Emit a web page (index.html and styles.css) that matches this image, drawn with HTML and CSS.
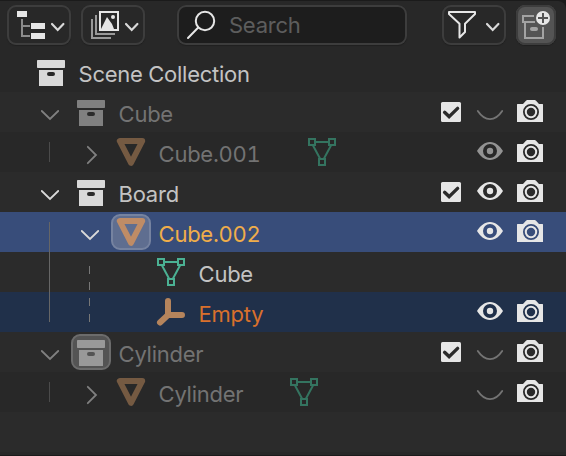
FILE: index.html
```html
<!DOCTYPE html>
<html lang="en">
<head>
<meta charset="utf-8">
<title>Outliner</title>
<link rel="stylesheet" href="styles.css">
</head>
<body>
<svg class="sprite" aria-hidden="true">
  <symbol id="down" viewBox="0 0 40 40"><path d="M11.8 19 20 27l8.2-8" fill="none" stroke="currentColor" stroke-width="1.8" stroke-linecap="round"/></symbol>
  <symbol id="right" viewBox="0 0 40 40"><path d="M17.8 14.8 26 23l-8.2 8.2" fill="none" stroke="currentColor" stroke-width="1.8" stroke-linecap="round"/></symbol>
  <symbol id="collection" viewBox="0 0 40 40"><rect x="7" y="8" width="28" height="8" rx=".7" fill="currentColor"/><path fill="currentColor" fill-rule="evenodd" d="M9 18h24v15.5q0 .5-.5.5h-23q-.5 0-.5-.5zM19 20a2 2 0 0 0 0 4h4a2 2 0 0 0 0-4z"/></symbol>
  <symbol id="object" viewBox="0 0 40 40"><path d="M9.7 9h22.6L21 31z" fill="none" stroke="currentColor" stroke-width="5.8" stroke-linejoin="round"/></symbol>
  <symbol id="mesh" viewBox="0 0 40 40"><path d="M8 7h6v6H8zM28 7h6v6h-6zM18 27h6v6h-6zM14 10h14M12 13.5l7 13M30 13.5l-7 13" fill="none" stroke="currentColor" stroke-width="2"/></symbol>
  <symbol id="empty" viewBox="0 0 40 40"><path d="M18 9v14h14M18 23l-8 7.5" fill="none" stroke="currentColor" stroke-width="6" stroke-linecap="round" stroke-linejoin="round"/></symbol>
  <symbol id="check" viewBox="0 0 40 40"><rect x="11" y="10" width="20" height="20" rx="1.5" fill="currentColor"/><path d="m14.6 20.3 4.5 4.3 8.5-8.2" fill="none" stroke="#2b2b2b" stroke-width="3.4" stroke-linecap="round"/></symbol>
  <symbol id="eye" viewBox="0 0 40 40"><path fill="currentColor" fill-rule="evenodd" d="M7 19C10 14 14.500 10 20 10s10 4 13 9c-3 5-7.500 9-13 9S10 24 7 19zM20 12a7 7 0 1 0 0 14a7 7 0 0 0 0-14z"/><circle cx="20" cy="19" r="3.200" fill="currentColor"/></symbol>
  <symbol id="closed" viewBox="0 0 40 40"><path d="M7.800 19C15 29.800 25 29.800 32.200 19" fill="none" stroke="currentColor" stroke-width="1.900" stroke-linecap="round"/></symbol>
  <symbol id="camera" viewBox="0 0 40 40"><path fill="currentColor" fill-rule="evenodd" d="M7.500 12H13l3.200-3.500q.5-.5 1.200-.5h7.200q.7 0 1.200.5L29 12h3.500q.5 0 .5.500v17q0 .5-.5.500h-25q-.5 0-.5-.5v-17q0-.5.5-.5zM21 12a8 8 0 1 0 0 16a8 8 0 0 0 0-16z"/><circle cx="21" cy="20" r="5.200" fill="none" stroke="currentColor" stroke-width="2"/></symbol>
</svg>
<main class="outliner">
  <header class="toolbar">
    <button class="tool" aria-label="Editor type"><svg width="64" height="40" viewBox="7 5 64 40"><path d="M22 19v17h8M22 26h8" fill="none" stroke="#8b8b8b" stroke-width="2"/><path d="M17 11h10v6H17zM31 23h14v6H31zM31 33h14v6H31z" fill="#e6e6e6"/><path class="caret" d="m52 24 5.700 6 5.700-6"/></svg></button>
    <button class="tool" aria-label="Display mode"><svg width="64" height="40" viewBox="81 5 64 40"><path d="M96 15v19h19M92 19v19h19" fill="none" stroke="#999" stroke-width="2"/><rect x="100" y="12" width="18" height="18" fill="none" stroke="#e6e6e6" stroke-width="2"/><path d="m101 29 6-12 5 7 2 5z" fill="#e6e6e6"/><circle cx="113" cy="17" r="2" fill="#e6e6e6"/><path class="caret" d="m126 24 5.700 6 5.700-6"/></svg></button>
    <label class="search"><svg width="52" height="40" viewBox="177 5 52 40"><path d="M198 27.800 188 38" stroke="#e6e6e6" stroke-width="2" stroke-linecap="round"/><circle cx="205" cy="21" r="9.200" fill="none" stroke="#e6e6e6" stroke-width="2"/></svg><span>Search</span></label>
    <button class="tool filter" aria-label="Filter"><svg width="64" height="40" viewBox="442 5 64 40"><path d="M449 12h26v2l-10 9.700v8.300l-5.500 5.500V23.700L449 14z" fill="none" stroke="#e6e6e6" stroke-width="2" stroke-linejoin="round"/><path class="caret" d="m487 24 5.700 6 5.700-6"/></svg></button>
    <button class="tool add" aria-label="New collection"><svg width="40" height="40" viewBox="516 5 40 40"><path d="M534 16h-11v6h12M525 22v16h18V27" fill="none" stroke="#a3a3a3" stroke-width="2"/><rect x="530" y="27" width="8" height="4" rx="2" fill="#a3a3a3"/><path fill="#e6e6e6" fill-rule="evenodd" d="M543 11a7 7 0 1 0 0 14a7 7 0 0 0 0-14zM542 13h2v4h4v2h-4v4h-2v-4h-4v-2h4z"/></svg></button>
  </header>
  <section class="tree">
    <div class="row bright"><svg class="cell"><use href="#collection"/></svg><span class="name">Scene Collection</span></div>
    <div class="row dim"><svg class="cell"><use href="#down"/></svg><svg class="cell"><use href="#collection"/></svg><span class="name">Cube</span>
      <div class="toggles"><svg class="cell"><use href="#check"/></svg><svg class="cell faded"><use href="#closed"/></svg><svg class="cell"><use href="#camera"/></svg></div></div>
    <div class="row dim"><i class="guide short"></i><svg class="cell"><use href="#right"/></svg><svg class="cell object"><use href="#object"/></svg><span class="name">Cube.001</span><svg class="cell mesh data"><use href="#mesh"/></svg>
      <div class="toggles"><svg class="cell half"><use href="#eye"/></svg><svg class="cell"><use href="#camera"/></svg></div></div>
    <div class="row bright"><svg class="cell"><use href="#down"/></svg><svg class="cell"><use href="#collection"/></svg><span class="name">Board</span>
      <div class="toggles"><svg class="cell"><use href="#check"/></svg><svg class="cell"><use href="#eye"/></svg><svg class="cell"><use href="#camera"/></svg></div></div>
    <div class="row bright active"><i class="guide first"></i><svg class="cell"><use href="#down"/></svg><svg class="cell object"><rect class="halo" x="2" y="3" width="38" height="34" rx="8"/><use href="#object"/></svg><span class="name">Cube.002</span>
      <div class="toggles"><svg class="cell"><use href="#eye"/></svg><svg class="cell"><use href="#camera"/></svg></div></div>
    <div class="row bright"><i class="guide"></i><i class="guide dashed top"></i><i class="indent"></i><svg class="cell mesh"><use href="#mesh"/></svg><span class="name">Cube</span></div>
    <div class="row bright selected"><i class="guide last"></i><i class="guide dashed bottom"></i><i class="indent"></i><svg class="cell object"><use href="#empty"/></svg><span class="name">Empty</span>
      <div class="toggles"><svg class="cell"><use href="#eye"/></svg><svg class="cell"><use href="#camera"/></svg></div></div>
    <div class="row dim"><svg class="cell"><use href="#down"/></svg><svg class="cell current"><rect class="halo" x="2" y="3" width="38" height="34" rx="8"/><use href="#collection"/></svg><span class="name">Cylinder</span>
      <div class="toggles"><svg class="cell"><use href="#check"/></svg><svg class="cell faded"><use href="#closed"/></svg><svg class="cell"><use href="#camera"/></svg></div></div>
    <div class="row dim"><i class="guide short"></i><svg class="cell"><use href="#right"/></svg><svg class="cell object"><use href="#object"/></svg><span class="name">Cylinder</span><svg class="cell mesh data"><use href="#mesh"/></svg>
      <div class="toggles"><svg class="cell faded"><use href="#closed"/></svg><svg class="cell"><use href="#camera"/></svg></div></div>
    <div class="row"></div>
  </section>
</main>
</body>
</html>
```
FILE: styles.css
```css
* { box-sizing: border-box; }
body {
  margin: 0;
  padding-top: 1px;
  background: #1b1b1b;
  font: 22px/40px Inter, "Liberation Sans", sans-serif;
  font-variant-numeric: tabular-nums;
  letter-spacing: -0.26px;
}
.sprite { display: none; }
.outliner {
  height: 454px;
  background: #282828;
  border-top-right-radius: 8px;
  overflow: hidden;
}
.toolbar {
  display: flex;
  height: 51px;
  padding: 4px 10px 0 7px;
}
.tool, .search {
  display: flex;
  height: 40px;
  padding: 0;
  border: 0;
  border-radius: 9px;
  background: #282828;
  box-shadow: inset 0 0 0 2px #3d3d3d, 0 1px 1px #202020;
}
.tool { width: 64px; margin-right: 10px; }
.search {
  width: 230px;
  margin-left: 22px;
  background: #1d1d1d;
  color: #5d5d5d;
}
.filter { margin-left: 35px; }
.tool.add { width: 40px; margin-right: 0; background: #545454; }
.caret {
  fill: none;
  stroke: #d9d9d9;
  stroke-width: 2.2;
  stroke-linecap: round;
}
.row {
  display: flex;
  height: 40px;
  padding: 0 16px 0 30px;
  color: #808080;
}
.row:nth-child(even) { background: #2b2b2b; }
.bright { color: #d9d9d9; }
.cell, .guide, .indent {
  flex: none;
  width: 40px;
  height: 40px;
  overflow: visible;
}
.name {
  padding: 2px 0 0 8.6px;
  color: #c3c3c3;
  white-space: nowrap;
}
.dim .name { color: #737373; }
.object { color: #bf8c66; }
.dim .object { color: #755a42; }
.mesh { color: #4bb193; }
.dim .mesh { color: #347460; }
.data { margin-left: 40px; }
.toggles {
  display: flex;
  margin-left: auto;
  color: #e6e6e6;
}
.faded { color: #747474; }
.half { color: #939393; }
.row.active { background: #384d7a; }
.row.selected { background: #20304a; }
.active .name { color: #f0ad4a; }
.selected .name { color: #d9702c; }
.selected .object { color: #b5845c; }
.halo { fill: #5f6e90; stroke: #7683a0; stroke-width: 2; }
.current { color: #999; }
.current .halo { fill: #545454; stroke: #6c6c6c; }
.guide { background: linear-gradient(#666, #666) 19px 0 / 1px 40px no-repeat; }
.guide.first { background-position: 19px 10px; background-size: 1px 30px; }
.guide.last { background-size: 1px 30px; }
.guide.short { background: linear-gradient(#4b4b4b, #4b4b4b) 19px 10px / 1px 20px no-repeat; }
.guide.dashed { background: none; }
.guide.dashed::before {
  content: "";
  display: block;
  width: 1px;
  margin-left: 19px;
  background: repeating-linear-gradient(#777 0 8px, transparent 8px 16px);
}
.guide.top { padding-top: 14px; }
.guide.top::before { height: 26px; }
.guide.bottom::before { height: 30px; background-position: 0 6px; background-size: 1px 16px; }
```
